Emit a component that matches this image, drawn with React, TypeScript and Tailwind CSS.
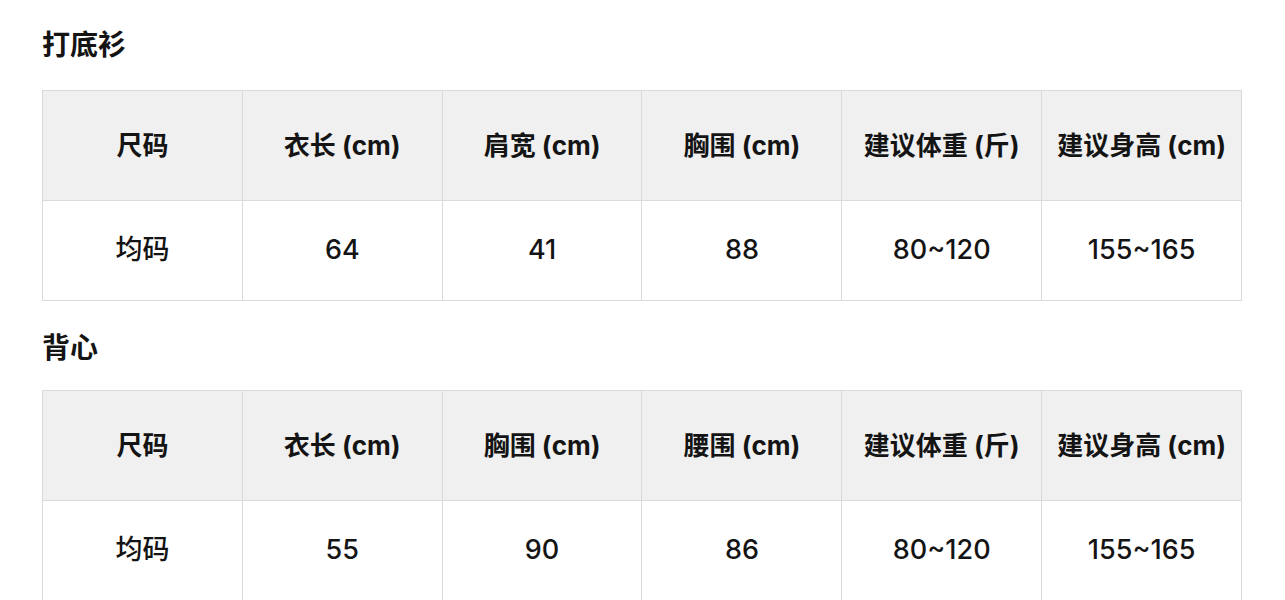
const tables = [
  {
    title: '打底衫',
    head: ['尺码', '衣长 (cm)', '肩宽 (cm)', '胸围 (cm)', '建议体重 (斤)', '建议身高 (cm)'],
    row: ['均码', '64', '41', '88', '80~120', '155~165'],
  },
  {
    title: '背心',
    head: ['尺码', '衣长 (cm)', '胸围 (cm)', '腰围 (cm)', '建议体重 (斤)', '建议身高 (cm)'],
    row: ['均码', '55', '90', '86', '80~120', '155~165'],
  },
];

export default function App() {
  return (
    <div
      className="min-h-[600px] bg-white pl-[42px] text-[#141414]"
      style={{ fontFamily: 'Inter, "Noto Sans CJK SC", sans-serif' }}
    >
      {tables.map((t, idx) => (
        <section key={t.title}>
          <h2
            className={`flex items-center text-[28px] font-bold leading-none ${
              idx === 0 ? 'h-[90px]' : 'h-[89px] pt-[4px]'
            }`}
          >
            {t.title}
          </h2>
          <table className="w-[1200px] table-fixed border-collapse text-center">
            <thead>
              <tr className="h-[110px] bg-[#f0f0f0]">
                {t.head.map((h) => (
                  <th key={h} className="border border-[#dadada] px-1 text-[26px] font-bold">
                    {h}
                  </th>
                ))}
              </tr>
            </thead>
            <tbody>
              <tr className="h-[100px]">
                {t.row.map((c, i) => (
                  <td key={i} className="border border-[#dadada] text-[27px] font-medium">
                    {c}
                  </td>
                ))}
              </tr>
            </tbody>
          </table>
        </section>
      ))}
    </div>
  );
}
